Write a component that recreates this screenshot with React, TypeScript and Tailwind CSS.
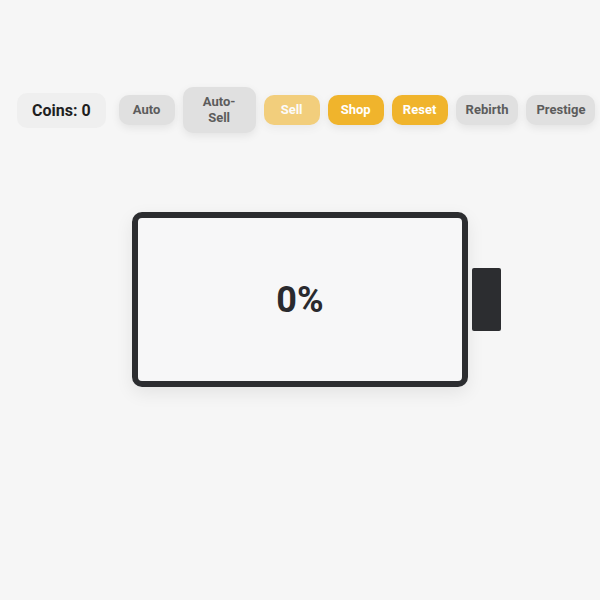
export default function App() {
    const grayBtn = "min-w-[56px] shrink-0 rounded-[10px] bg-[#e0e0e0] px-2.5 py-[7px] text-[13px] leading-4 font-bold text-[#5c5c5c] shadow-[0_3px_8px_rgba(0,0,0,0.08)]";
    const yellowBtn = "min-w-[56px] shrink-0 whitespace-nowrap rounded-[10px] bg-[#f0b42c] px-2.5 py-[7px] text-[13px] leading-4 font-bold text-white shadow-[0_3px_8px_rgba(0,0,0,0.08)]";

    return (
        <div className="min-h-[600px] w-[600px] overflow-hidden bg-[#f6f6f6] font-['Roboto',sans-serif]">
            <div className="flex items-center gap-2 pl-[17px] pt-[87px]">
                <div className="mr-[5px] shrink-0 whitespace-nowrap rounded-[10px] bg-[#efefef] px-[15px] py-[8px] text-[16px] leading-[19px] font-bold text-[#1f1f1f]">
                    Coins: 0
                </div>
                <button className={grayBtn + " whitespace-nowrap"}>Auto</button>
                <button className={grayBtn + " w-[73px] px-3.5"}>Auto-Sell</button>
                <button className={yellowBtn + " opacity-60"}>Sell</button>
                <button className={yellowBtn}>Shop</button>
                <button className={yellowBtn}>Reset</button>
                <button className={grayBtn + " whitespace-nowrap"}>Rebirth</button>
                <button className={grayBtn + " whitespace-nowrap"}>Prestige</button>
            </div>

            <div className="mt-[79px] flex items-center justify-center pl-[33px]">
                <div className="flex h-[175px] w-[336px] shrink-0 items-center justify-center rounded-[10px] border-[6px] border-[#2c2d30] bg-[#f7f7f8] shadow-[0_6px_18px_rgba(0,0,0,0.08)]">
                    <span className="text-[36px] font-bold text-[#2a2a2e]">0%</span>
                </div>
                <div className="ml-1 h-[63px] w-[29px] shrink-0 rounded-[2px] bg-[#2c2d30]" />
            </div>
        </div>
    )
}
